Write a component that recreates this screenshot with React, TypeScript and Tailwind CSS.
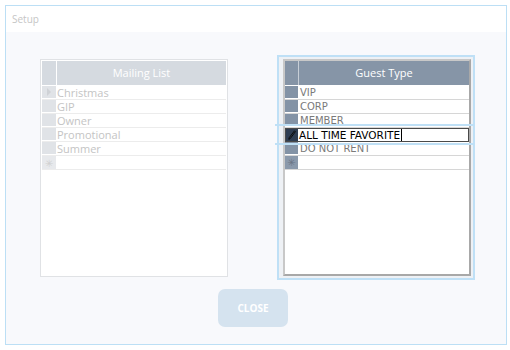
import React from "react";

const openSans = { fontFamily: '"Open Sans", "Noto Sans", sans-serif' };
const dejavu = { fontFamily: '"DejaVu Sans", "Liberation Sans", sans-serif' };

function LeftGrid() {
  const rows = ["Christmas", "GIP", "Owner", "Promotional", "Summer"];
  return (
    <div className="mt-[4px] w-[188px] h-[218px] border border-[#e0e2e5] bg-white p-[1px] flex flex-col" style={openSans}>
      <div className="flex h-[25px] border-b border-white">
        <div className="w-[14px] bg-[#d5dae0]" />
        <div className="w-[1px] bg-white" />
        <div className="flex-1 bg-[#d5dae0] flex items-center justify-center text-[11px] text-white">Mailing List</div>
      </div>
      {rows.map((r, i) => (
        <div key={r} className="flex h-[14px] border-b border-[#ececec]">
          <div className="w-[14px] bg-[#e0e3e7] flex items-center justify-center border-b border-white">
            {i === 0 && (
              <svg width="6" height="8" viewBox="0 0 6 8"><path d="M1 0 L5 4 L1 8 Z" fill="#cfd2d6" /></svg>
            )}
          </div>
          <div className="w-[1px] bg-white" />
          <div className="flex-1 text-[11px] leading-[13px] text-[#c4c4c4] pl-[0px]">{r}</div>
        </div>
      ))}
      <div className="flex h-[14px] border-b border-[#ececec]">
        <div className="w-[14px] bg-[#e7e9ec] flex items-center justify-center text-[10px] leading-none text-[#d0d0d0]">✳</div>
        <div className="w-[1px] bg-white" />
        <div className="flex-1" />
      </div>
    </div>
  );
}

function RightGrid() {
  const rows = ["VIP", "CORP", "MEMBER"];
  return (
    <div className="relative w-[198px] h-[225px] border-2 border-[#bfe0f6] bg-[#eef1f5] pl-[4px] pr-[2px] pt-[2px] pb-[2px]">
      <div className="h-full border-2 border-t-[#c8c8c8] border-l-[#c8c8c8] border-r-[#a8a8a8] border-b-[#a8a8a8] bg-white flex flex-col" style={dejavu}>
        <div className="flex h-[25px] border-b border-white">
          <div className="w-[13px] bg-[#8594a6]" />
          <div className="w-[1px] bg-[#c7ced6]" />
          <div className="flex-1 bg-[#8695a7] flex items-center justify-center text-[11px] text-white" style={openSans}>Guest Type</div>
        </div>
        {rows.map((r) => (
          <div key={r} className="flex h-[14px] border-b border-[#d6d6d6]">
            <div className="w-[13px] bg-[#8393a6] border-b border-white" />
            <div className="w-[1px] bg-white" />
            <div className="flex-1 text-[10px] leading-[13px] text-[#7a7a7a] pl-[1px]">{r}</div>
          </div>
        ))}
        <div className="flex h-[14px] border border-[#4a4a4a]">
          <div className="w-[12px] bg-[#2e3d52] flex items-center justify-center">
            <svg width="8" height="10" viewBox="0 0 8 10">
              <path d="M6.5 0.8 L7.4 1.7 L2.2 8.6 L0.8 9.3 L1.2 7.7 Z" fill="none" stroke="#0b0b0b" strokeWidth="1" />
            </svg>
          </div>
          <div className="w-[1px] bg-white" />
          <div className="flex-1 flex items-center text-[10.5px] leading-[12px] text-black pl-[0px]">
            ALL TIME FAVORITE<span className="inline-block w-[1px] h-[12px] bg-black ml-[1px]" />
          </div>
        </div>
        <div className="flex h-[14px] border-b border-[#d6d6d6]">
          <div className="w-[13px] bg-[#8393a6] border-b border-white" />
          <div className="w-[1px] bg-white" />
          <div className="flex-1 text-[10px] leading-[13px] text-[#7a7a7a] pl-[1px]">DO NOT RENT</div>
        </div>
        <div className="flex h-[14px] border-b border-[#d6d6d6]">
          <div className="w-[13px] bg-[#8a99ab] flex items-center justify-center text-[10px] leading-none text-[#6a7585]">✳</div>
          <div className="w-[1px] bg-white" />
          <div className="flex-1" />
        </div>
      </div>
      <div className="absolute left-[-4px] right-[-1px] top-[67px] h-[2px] bg-[#bfe0f6]" />
      <div className="absolute left-[-4px] right-[-1px] top-[86px] h-[2px] bg-[#bfe0f6]" />
    </div>
  );
}

export default function App() {
  return (
    <div className="w-[510px] h-[350px] bg-white pt-[5px] pl-[5px]">
      <div className="w-[502px] h-[340px] border border-[#bcdff5] flex flex-col">
        <div className="h-[26px] bg-white flex items-center pl-[6px] text-[10px] text-[#c6c6c6]" style={openSans}>Setup</div>
        <div className="flex-1 bg-[#f8f9fc] flex flex-col">
          <div className="flex items-start pl-[34px] pt-[23px] gap-[49px]">
            <LeftGrid />
            <RightGrid />
          </div>
          <div className="pl-[212px] pt-[9px]">
            <div className="w-[70px] h-[38px] rounded-[7px] bg-[#d5e3ef] flex items-center justify-center text-[10px] font-bold text-white" style={openSans}>CLOSE</div>
          </div>
        </div>
      </div>
    </div>
  );
}
